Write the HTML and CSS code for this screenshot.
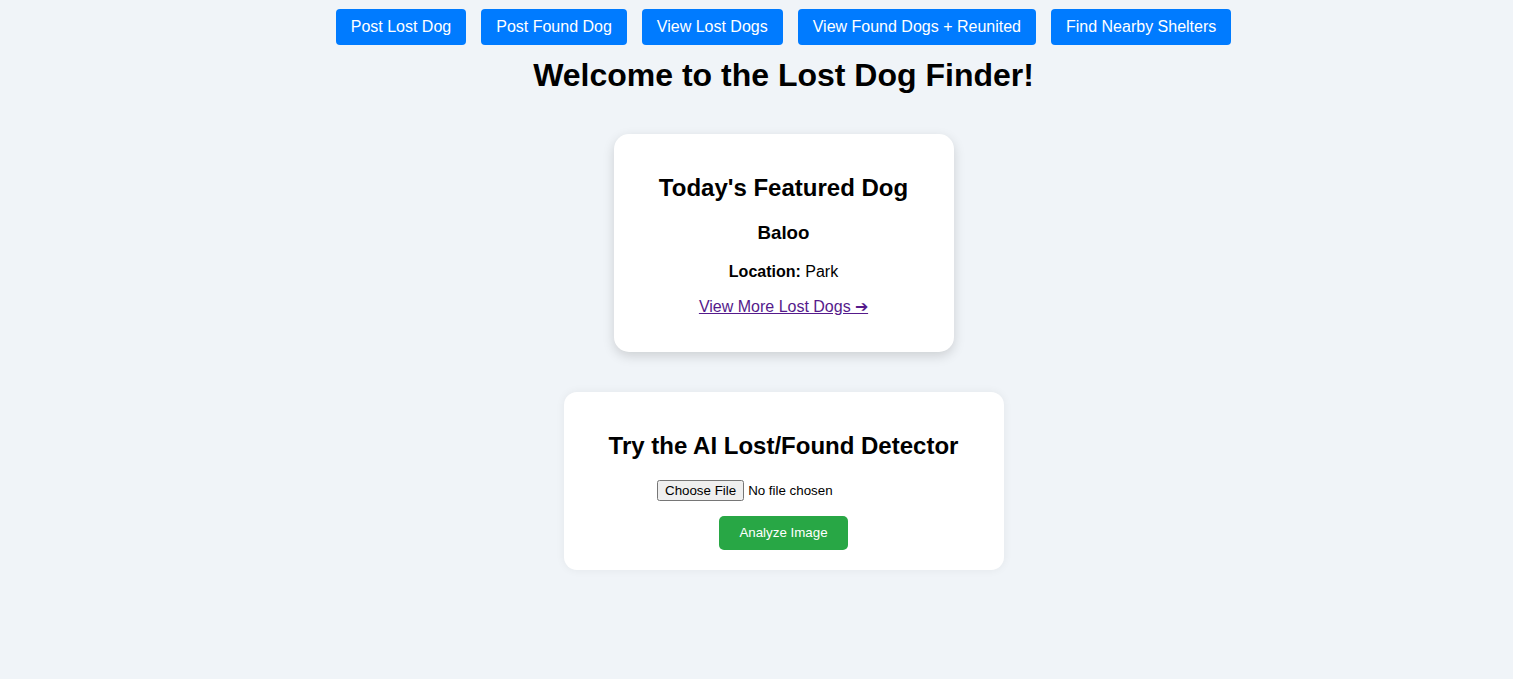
FILE: index.html
```html
<!DOCTYPE html>
<html lang="en">
<head>
<meta charset="utf-8">
<title>Lost Dog Finder</title>
<link rel="stylesheet" href="styles.css">
</head>
<body>
<nav class="nav">
  <a class="nav-btn" href="#">Post Lost Dog</a>
  <a class="nav-btn" href="#">Post Found Dog</a>
  <a class="nav-btn" href="#">View Lost Dogs</a>
  <a class="nav-btn" href="#">View Found Dogs + Reunited</a>
  <a class="nav-btn" href="#">Find Nearby Shelters</a>
</nav>
<h1 class="title">Welcome to the Lost Dog Finder!</h1>
<section class="card card-featured">
  <h2>Today's Featured Dog</h2>
  <h3>Baloo</h3>
  <p><strong>Location:</strong> Park</p>
  <p><a class="more-link" href="#">View More Lost Dogs ➔</a></p>
</section>
<section class="card card-ai">
  <h2>Try the AI Lost/Found Detector</h2>
  <input class="file-input" type="file">
  <div><button class="analyze-btn" type="button">Analyze Image</button></div>
</section>
</body>
</html>
```
FILE: styles.css
```css
body {
  margin: 8px;
  padding-left: 54px;
  background: #f0f4f8;
  font-family: "Liberation Sans", Arial, sans-serif;
  color: #000;
  text-align: center;
}
.nav {
  display: flex;
  justify-content: center;
  gap: 15px;
  padding-top: 1px;
}
.nav-btn {
  display: inline-block;
  background: #007bff;
  color: #fff;
  text-decoration: none;
  font-size: 16px;
  line-height: 18.4px;
  padding: 9px 15px;
  border-radius: 4px;
}
.title {
  font-size: 32px;
  margin: 12px 0 0;
}
.card {
  background: #fff;
  border-radius: 15px;
  padding: 20px;
  margin: 40px auto;
  box-sizing: border-box;
}
.card h2 {
  font-size: 24px;
  margin: 20px 0;
}
.card h3 {
  font-size: 18.72px;
  margin: 18.72px 0;
}
.card p {
  font-size: 16px;
  margin: 16px 0;
}
.card-featured {
  width: 340px;
  box-shadow: 0 4px 12px rgba(0, 0, 0, 0.15);
}
.card-ai {
  width: 440px;
  border-radius: 13px;
  box-shadow: 0 0 10px rgba(0, 0, 0, 0.06);
}
.more-link {
  color: #551a8b;
}
.file-input {
  font-family: "Liberation Sans", Arial, sans-serif;
  font-size: 13.33px;
}
.analyze-btn {
  margin-top: 15px;
  background: #28a745;
  color: #fff;
  border: none;
  border-radius: 5px;
  padding: 10px 20px;
  font-family: "Liberation Sans", Arial, sans-serif;
  font-size: 13.33px;
  line-height: 14px;
}
```
